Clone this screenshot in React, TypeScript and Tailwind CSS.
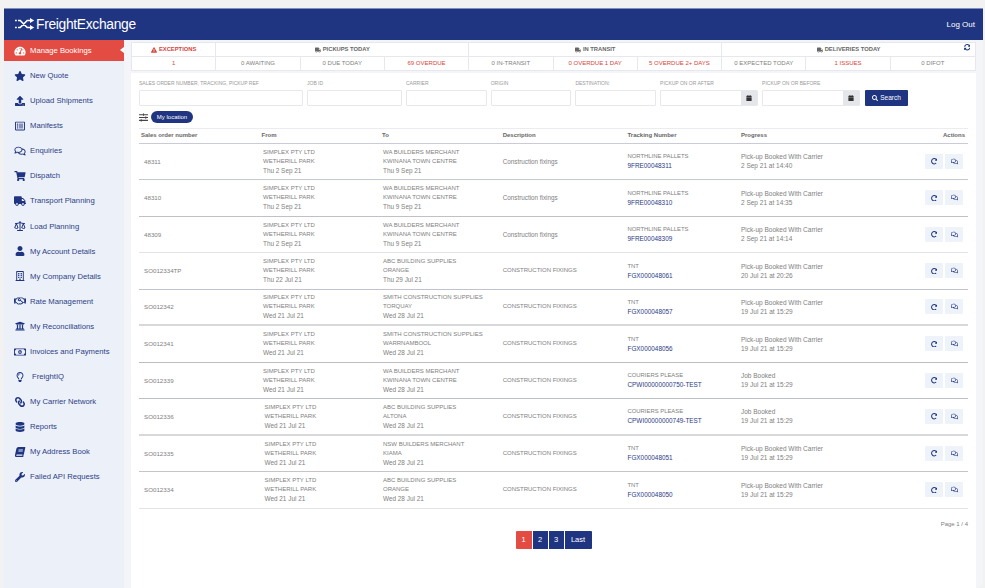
import {
  FaTachometerAlt,
  FaStar,
  FaUpload,
  FaRegListAlt,
  FaRegComments,
  FaShoppingCart,
  FaTruck,
  FaUser,
  FaRegBuilding,
  FaRegHandshake,
  FaUniversity,
  FaRegMoneyBillAlt,
  FaRegLightbulb,
  FaLink,
  FaDatabase,
  FaBook,
  FaWrench,
  FaExclamationTriangle,
  FaSyncAlt,
  FaRedoAlt,
  FaCalendar,
  FaSearch,
  FaSlidersH,
} from "react-icons/fa";
import { Scale } from "lucide-react";

const nav = [
  { label: "New Quote", icon: FaStar },
  { label: "Upload Shipments", icon: FaUpload },
  { label: "Manifests", icon: FaRegListAlt },
  { label: "Enquiries", icon: FaRegComments },
  { label: "Dispatch", icon: FaShoppingCart },
  { label: "Transport Planning", icon: FaTruck },
  { label: "Load Planning", icon: Scale },
  { label: "My Account Details", icon: FaUser },
  { label: "My Company Details", icon: FaRegBuilding },
  { label: "Rate Management", icon: FaRegHandshake },
  { label: "My Reconciliations", icon: FaUniversity },
  { label: "Invoices and Payments", icon: FaRegMoneyBillAlt },
  { label: "FreightIQ", icon: FaRegLightbulb },
  { label: "My Carrier Network", icon: FaLink },
  { label: "Reports", icon: FaDatabase },
  { label: "My Address Book", icon: FaBook },
  { label: "Failed API Requests", icon: FaWrench },
];

const iconClass: Record<string, string> = {
  "Load Planning": "h-[12px] w-[12px]",
  "My Carrier Network": "w-[12px] text-[10px] -scale-x-100",
  "My Address Book": "w-[12px] text-[10px] -skew-x-12",
};

const stats = [
  { text: "1", red: true },
  { text: "0 AWAITING" },
  { text: "0 DUE TODAY" },
  { text: "69 OVERDUE", red: true },
  { text: "0 IN-TRANSIT" },
  { text: "0 OVERDUE 1 DAY", red: true },
  { text: "5 OVERDUE 2+ DAYS", red: true },
  { text: "0 EXPECTED TODAY" },
  { text: "1 ISSUES", red: true },
  { text: "0 DIFOT" },
];

const filters = [
  { label: "SALES ORDER NUMBER, TRACKING, PICKUP REF", w: "w-[164px]" },
  { label: "JOB ID", w: "w-[95px]" },
  { label: "CARRIER", w: "w-[80.7px]" },
  { label: "ORIGIN", w: "w-[80.7px]" },
  { label: "DESTINATION:", w: "w-[80.7px]" },
];

const simplex = ["SIMPLEX PTY LTD", "WETHERILL PARK"];
const bookedCarrier = "Pick-up Booked With Carrier";

const rows = [
  { so: "48311", from: "Thu 2 Sep 21", to: ["WA BUILDERS MERCHANT", "KWINANA TOWN CENTRE", "Thu 9 Sep 21"], desc: "Construction fixings", carrier: "NORTHLINE PALLETS", track: "9FRE00048311", progress: bookedCarrier, at: "2 Sep 21 at 14:40", line: "border-[#c4c6d2]" },
  { so: "48310", from: "Thu 2 Sep 21", to: ["WA BUILDERS MERCHANT", "KWINANA TOWN CENTRE", "Thu 9 Sep 21"], desc: "Construction fixings", carrier: "NORTHLINE PALLETS", track: "9FRE00048310", progress: bookedCarrier, at: "2 Sep 21 at 14:35", line: "border-[#c0c0c6]" },
  { so: "48309", from: "Thu 2 Sep 21", to: ["WA BUILDERS MERCHANT", "KWINANA TOWN CENTRE", "Thu 9 Sep 21"], desc: "Construction fixings", carrier: "NORTHLINE PALLETS", track: "9FRE00048309", progress: bookedCarrier, at: "2 Sep 21 at 14:14", line: "border-[#e4e4e8]" },
  { so: "SO012334TP", from: "Thu 22 Jul 21", to: ["ABC BUILDING SUPPLIES", "ORANGE", "Thu 29 Jul 21"], desc: "CONSTRUCTION FIXINGS", carrier: "TNT", track: "FGX000048061", progress: bookedCarrier, at: "20 Jul 21 at 20:26", line: "border-[#c0c2ce]" },
  { so: "SO012342", from: "Wed 21 Jul 21", to: ["SMITH CONSTRUCTION SUPPLIES", "TORQUAY", "Wed 28 Jul 21"], desc: "CONSTRUCTION FIXINGS", carrier: "TNT", track: "FGX000048057", progress: bookedCarrier, at: "19 Jul 21 at 15:29", line: "border-b-2 border-[#d8d8dc]" },
  { so: "SO012341", from: "Wed 21 Jul 21", to: ["SMITH CONSTRUCTION SUPPLIES", "WARRNAMBOOL", "Wed 28 Jul 21"], desc: "CONSTRUCTION FIXINGS", carrier: "TNT", track: "FGX000048056", progress: bookedCarrier, at: "19 Jul 21 at 15:29", line: "border-[#bcbcc4]" },
  { so: "SO012339", from: "Wed 21 Jul 21", to: ["WA BUILDERS MERCHANT", "KWINANA TOWN CENTRE", "Wed 28 Jul 21"], desc: "CONSTRUCTION FIXINGS", carrier: "COURIERS PLEASE", track: "CPWI00000000750-TEST", progress: "Job Booked", at: "19 Jul 21 at 15:29", line: "border-[#bcbec8]" },
  { so: "SO012336", from: "Wed 21 Jul 21", to: ["ABC BUILDING SUPPLIES", "ALTONA", "Wed 28 Jul 21"], desc: "CONSTRUCTION FIXINGS", carrier: "COURIERS PLEASE", track: "CPWI00000000749-TEST", progress: "Job Booked", at: "19 Jul 21 at 15:29", line: "border-b-2 border-[#d8d8dc]" },
  { so: "SO012335", from: "Wed 21 Jul 21", to: ["NSW BUILDERS MERCHANT", "KIAMA", "Wed 28 Jul 21"], desc: "CONSTRUCTION FIXINGS", carrier: "TNT", track: "FGX000048051", progress: bookedCarrier, at: "19 Jul 21 at 15:29", line: "border-[#c4c4ca]" },
  { so: "SO012334", from: "Wed 21 Jul 21", to: ["ABC BUILDING SUPPLIES", "ORANGE", "Wed 28 Jul 21"], desc: "CONSTRUCTION FIXINGS", carrier: "TNT", track: "FGX000048050", progress: bookedCarrier, at: "19 Jul 21 at 15:29", line: "border-[#e4e4e8]" },
];

const cols = "grid grid-cols-[120.5px_120.5px_120.7px_124.8px_113.5px_1fr]";

function Logo() {
  return (
    <svg width="20" height="12" viewBox="0 0 20 12" fill="none" stroke="white" strokeWidth="1.7">
      <path d="M0 2.5h1.8M3 2.5h2.2l7 7H15M0 9.5h1.8M3 9.5h2.2l7-7H15" />
      <path d="M15 0l4.2 2.5L15 5zM15 7l4.2 2.5L15 12z" fill="white" stroke="none" />
    </svg>
  );
}

function DateInput() {
  return (
    <div className="flex h-[16px] w-[98px] rounded-[1px] border border-[#e6e8ec] bg-white">
      <div className="flex-1" />
      <div className="flex w-[16px] items-center justify-center bg-[#e4e6ea]">
        <FaCalendar className="text-[6px] text-[#333]" />
      </div>
    </div>
  );
}

export default function App() {
  return (
    <div className="h-[588px] w-[985px] overflow-hidden bg-[#f2f2f2] pt-[8px] pr-[2px] pl-[4px] font-['Liberation_Sans',sans-serif]">
      <header className="flex h-[32px] items-center justify-between border-t border-[#7f90bd] bg-[#1f3581] pr-[8px] pl-[11px] text-white">
        <div className="flex items-center gap-[1px]">
          <Logo />
          <span className="text-[13.8px] leading-none tracking-[-0.3px]">FreightExchange</span>
        </div>
        <span className="mt-[1px] text-[8px]">Log Out</span>
      </header>

      <div className="flex h-[548px] rounded-br-[8px] bg-[#f4f5f8]">
        <aside className="w-[120px] shrink-0 bg-[#ecf1f9] text-[7.7px] text-[#2d3f85]">
          <div className="relative mb-[2.5px] flex h-[21px] items-center bg-[#e34c42] pl-[10px] text-white">
            <FaTachometerAlt className="w-[12px] text-[10px]" />
            <span className="ml-[4px]">Manage Bookings</span>
            <span className="absolute right-0 top-[7px] h-0 w-0 border-y-[3.5px] border-r-[4px] border-y-transparent border-r-white" />
          </div>
          {nav.map((item) => {
            const Icon = item.icon;
            return (
              <div key={item.label} className="flex h-[25.06px] items-center pl-[10px]">
                <Icon className={`text-[#1f3581] ${iconClass[item.label] ?? "w-[12px] text-[10px]"}`} />
                <span className={item.label === "FreightIQ" ? "ml-[6px]" : "ml-[4px]"}>{item.label}</span>
              </div>
            );
          })}
        </aside>

        <main className="ml-[7px] mr-[8px] flex-1 text-[#808080]">
          <section className="mt-[2px] border border-[#e6e8ee] bg-white text-[6px]">
            <div className="relative grid h-[14px] grid-cols-10 items-center border-b border-[#e6e8ee] text-[5.8px] font-bold text-[#666]">
              <div className="flex h-full items-center justify-center gap-[2px] border-r border-[#e6e8ee] text-[#d8443c]">
                <FaExclamationTriangle className="text-[6px]" /> EXCEPTIONS
              </div>
              <div className="col-span-3 flex h-full items-center justify-center gap-[2px] border-r border-[#e6e8ee]">
                <FaTruck className="text-[6px]" /> PICKUPS TODAY
              </div>
              <div className="col-span-3 flex h-full items-center justify-center gap-[2px] border-r border-[#e6e8ee]">
                <FaTruck className="text-[6px]" /> IN TRANSIT
              </div>
              <div className="col-span-3 flex h-full items-center justify-center gap-[2px]">
                <FaTruck className="text-[6px]" /> DELIVERIES TODAY
              </div>
              <FaSyncAlt className="absolute right-[5px] top-[1px] text-[6.5px] text-[#1f3581]" />
            </div>
            <div className="grid h-[13px] grid-cols-10 items-center">
              {stats.map((s, i) => (
                <div
                  key={s.text}
                  className={`flex h-full items-center justify-center ${i < 9 ? "border-r border-[#e6e8ee]" : ""} ${s.red ? "text-[#d8443c]" : ""}`}
                >
                  {s.text}
                </div>
              ))}
            </div>
          </section>

          <section className="mt-[2px] h-[516px] bg-white px-[8px] pt-[7px]">
            <div className="flex items-end gap-[4px] text-[5px] text-[#999]">
              {filters.map((f) => (
                <div key={f.label} className={f.w}>
                  <div className="mb-[3px] whitespace-nowrap leading-[7px]">{f.label}</div>
                  <div className="h-[16px] rounded-[1px] border border-[#e6e8ec]" />
                </div>
              ))}
              <div>
                <div className="mb-[3px] leading-[7px]">PICKUP ON OR AFTER</div>
                <DateInput />
              </div>
              <div>
                <div className="mb-[3px] leading-[7px]">PICKUP ON OR BEFORE</div>
                <DateInput />
              </div>
              <button className="ml-[1px] flex h-[16px] w-[43px] items-center justify-center gap-[2px] rounded-[1px] bg-[#1f3581] text-[6.5px] text-white">
                <FaSearch className="text-[6px]" /> Search
              </button>
            </div>

            <div className="mt-[5px] flex h-[12px] items-center gap-[3px]">
              <FaSlidersH className="w-[9px] text-[9px] text-[#444]" />
              <span className="flex h-[12px] w-[42px] items-center justify-center rounded-full bg-[#1f3581] text-[6px] text-white">
                My location
              </span>
            </div>

            <div className="mt-[5px] w-[829px] border-t border-[#ececf0]">
              <div className={`${cols} h-[14.5px] items-center border-b border-[#c9cbd8] pl-[2px] text-[6px] font-bold text-[#666]`}>
                <div>Sales order number</div>
                <div>From</div>
                <div>To</div>
                <div>Description</div>
                <div>Tracking Number</div>
                <div className="flex justify-between pr-[3px]">
                  <span>Progress</span>
                  <span>Actions</span>
                </div>
              </div>
              {rows.map((r, i) => (
                <div
                  key={r.so}
                  className={`${cols} h-[36.52px] items-center border-b pl-[2px] text-[6px] leading-[9px] ${r.line}`}
                >
                  <div className="pl-[3px] text-[6.2px]">{r.so}</div>
                  <div className={i >= 7 ? "pl-[3px]" : "pl-[1.5px]"}>
                    <div>{simplex[0]}</div>
                    <div>{simplex[1]}</div>
                    <div className="text-[6.4px]">{r.from}</div>
                  </div>
                  <div className="pl-[1px]">
                    {r.to.map((t, j) => (
                      <div key={t} className={j === 2 ? "text-[6.4px]" : ""}>
                        {t}
                      </div>
                    ))}
                  </div>
                  <div className={r.desc === "Construction fixings" ? "text-[6.3px]" : ""}>{r.desc}</div>
                  <div>
                    <div className="text-[5.9px]">{r.carrier}</div>
                    <div className="text-[6.4px] text-[#2a3b85]">{r.track}</div>
                  </div>
                  <div className="flex items-center justify-between pr-[5px]">
                    <div className="text-[6.5px]">
                      <div>{r.progress}</div>
                      <div>{r.at}</div>
                    </div>
                    <div className="flex gap-[2px] text-[#1f3581]">
                      <span className="flex h-[15px] w-[18px] items-center justify-center rounded-[1px] bg-[#eef2f9]">
                        <FaRedoAlt className="text-[6.5px]" />
                      </span>
                      <span className="flex h-[15px] w-[18px] items-center justify-center rounded-[1px] bg-[#eef2f9]">
                        <FaRegComments className="text-[7px]" />
                      </span>
                    </div>
                  </div>
                </div>
              ))}
              <div className="mt-[12px] text-right text-[6px] leading-[7px]">Page 1 / 4</div>
              <div className="mt-[3px] flex justify-center gap-[1px] text-[7.5px] text-white">
                <span className="flex h-[18px] w-[16px] items-center justify-center rounded-l-[1px] bg-[#e34c42]">1</span>
                <span className="flex h-[18px] w-[15px] items-center justify-center bg-[#1f3581]">2</span>
                <span className="flex h-[18px] w-[15px] items-center justify-center bg-[#1f3581]">3</span>
                <span className="flex h-[18px] w-[27px] items-center justify-center rounded-r-[1px] bg-[#1f3581]">Last</span>
              </div>
            </div>
          </section>
        </main>
      </div>
    </div>
  );
}
